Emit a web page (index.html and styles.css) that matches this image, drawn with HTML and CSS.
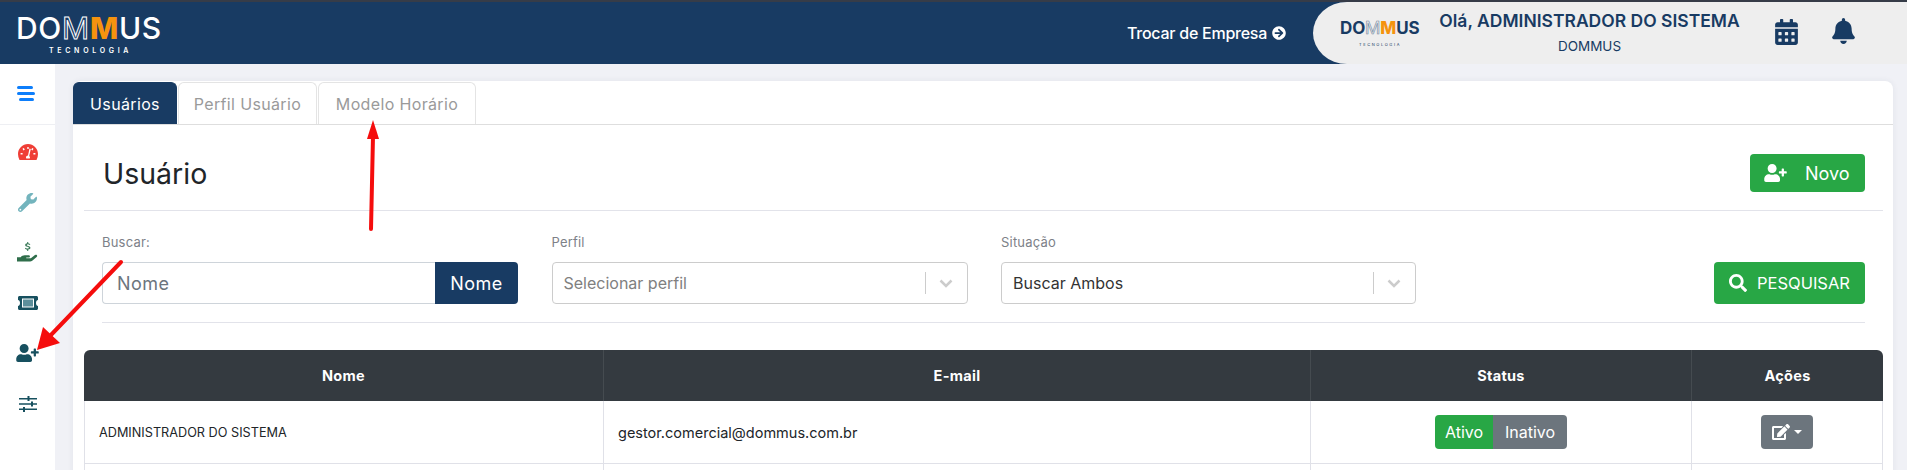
FILE: index.html
```html
<!DOCTYPE html>
<html>
<head>
	<title>Usuários</title>
	<meta http-equiv="content-type" content="text/html;charset=utf-8" />
	<link rel="stylesheet" href="styles.css">
</head>
<body>
	<header class="topbar">
		<div class="logo">
			<div class="logo-name">DO<span class="m-line">M</span><span class="m-fill">M</span>US</div>
			<div class="logo-sub">TECNOLOGIA</div>
		</div>
		<a class="switch">Trocar de Empresa
			<svg class="switch-icon" viewBox="0 0 512 512"><path d="M256 8c137 0 248 111 248 248S393 504 256 504 8 393 8 256 119 8 256 8zm-28.900 143.600l75.500 72.400H120c-13.300 0-24 10.700-24 24v16c0 13.300 10.700 24 24 24h182.600l-75.500 72.400c-9.700 9.300-9.900 24.800-.4 34.300l11 10.900c9.400 9.400 24.600 9.400 33.900 0L404.300 273c9.400-9.400 9.400-24.600 0-33.900L271.600 106.300c-9.400-9.400-24.600-9.400-33.900 0l-11 10.900c-9.500 9.600-9.300 25.100.4 34.400z"/></svg>
		</a>
		<div class="userbox">
			<div class="mini-logo">
				<div class="mini-name">DO<span class="m-line dark">M</span><span class="m-fill">M</span>US</div>
				<div class="mini-sub">TECNOLOGIA</div>
			</div>
			<div class="hello">
				<div class="hello-name">Olá, ADMINISTRADOR DO SISTEMA</div>
				<div class="hello-company">DOMMUS</div>
			</div>
			<svg class="calendar" viewBox="0 0 448 512"><path d="M0 464c0 26.500 21.500 48 48 48h352c26.500 0 48-21.500 48-48V192H0v272zm320-196c0-6.600 5.400-12 12-12h40c6.600 0 12 5.400 12 12v40c0 6.600-5.400 12-12 12h-40c-6.600 0-12-5.400-12-12v-40zm0 128c0-6.600 5.400-12 12-12h40c6.600 0 12 5.400 12 12v40c0 6.600-5.400 12-12 12h-40c-6.600 0-12-5.400-12-12v-40zM192 268c0-6.600 5.400-12 12-12h40c6.600 0 12 5.400 12 12v40c0 6.600-5.400 12-12 12h-40c-6.600 0-12-5.400-12-12v-40zm0 128c0-6.600 5.400-12 12-12h40c6.600 0 12 5.400 12 12v40c0 6.600-5.400 12-12 12h-40c-6.600 0-12-5.400-12-12v-40zM64 268c0-6.600 5.400-12 12-12h40c6.600 0 12 5.400 12 12v40c0 6.600-5.400 12-12 12H76c-6.600 0-12-5.400-12-12v-40zm0 128c0-6.600 5.400-12 12-12h40c6.600 0 12 5.400 12 12v40c0 6.600-5.400 12-12 12H76c-6.600 0-12-5.400-12-12v-40zM400 64h-48V16c0-8.800-7.200-16-16-16h-32c-8.800 0-16 7.200-16 16v48H160V16c0-8.800-7.200-16-16-16h-32c-8.800 0-16 7.200-16 16v48H48C21.500 64 0 85.500 0 112v48h448v-48c0-26.500-21.500-48-48-48z"/></svg>
			<svg class="bell" viewBox="0 0 448 512"><path d="M224 512c35.320 0 63.970-28.650 63.970-64H160.030c0 35.350 28.650 64 63.970 64zm215.390-149.710c-19.320-20.760-55.470-51.990-55.470-154.290 0-77.700-54.480-139.900-127.940-155.160V32c0-17.670-14.320-32-31.980-32s-31.980 14.330-31.980 32v20.840C118.560 68.100 64.080 130.300 64.080 208c0 102.300-36.150 133.530-55.470 154.290-6 6.450-8.660 14.160-8.610 21.710.11 16.400 12.980 32 32.100 32h383.800c19.120 0 32-15.600 32.100-32 .05-7.550-2.610-15.270-8.610-21.710z"/></svg>
		</div>
	</header>

	<div class="main">
		<nav class="sidebar">
			<div class="burger"><span></span><span></span><span></span></div>
			<ul class="menu">
				<li>
					<svg viewBox="0 0 20 16" class="ico-gauge"><path fill-rule="evenodd" d="M10 0C4.500 0 0 4.500 0 10c0 2 .5 4 1.500 6h17c1-2 1.500-4 1.500-6 0-5.500-4.500-10-10-10zM9.300 3h1.400v2H9.300zM4.500 4.700l1.300-.8 1 1.700-1.300.8zM2.600 9h2v1.500h-2zM15.400 9h2v1.500h-2zM13.200 5.600l1-1.700 1.300.8-1 1.700zM11.500 4.500l1.300.4-1.600 7.100c.5.400.8 1 .8 1.600 0 .4-.1.700-.3 1H8.300c-.2-.3-.3-.6-.3-1 0-1.100.9-2 2-2z"/></svg>
				</li>
				<li>
					<svg viewBox="0 0 512 512" class="ico-wrench"><path d="M507.730 109.100c-2.240-9.030-13.540-12.090-20.120-5.510l-74.360 74.360-67.880-11.310-11.310-67.880 74.360-74.360c6.620-6.620 3.430-17.900-5.660-20.160-47.380-11.740-99.550.91-136.580 37.930-39.640 39.640-50.550 97.100-34.050 147.200L18.740 402.760c-24.990 24.990-24.990 65.510 0 90.500 24.990 24.990 65.510 24.990 90.500 0l213.210-213.210c50.120 16.710 107.470 5.680 147.370-34.220 37.070-37.070 49.700-89.320 37.910-136.730zM64 472c-13.250 0-24-10.750-24-24 0-13.260 10.750-24 24-24s24 10.740 24 24c0 13.250-10.750 24-24 24z"/></svg>
				</li>
				<li>
					<svg viewBox="0 0 20 20" class="ico-hand"><path class="hand-dollar" d="M10.700 0v1.100c1 .1 1.700.6 2 1.300l-1 .5c-.2-.4-.6-.7-1.300-.7-.7 0-1.100.3-1.100.7 0 .4.300.6 1.300.8 1.400.3 2.200.7 2.200 1.800 0 1-.8 1.600-2.100 1.700V8.500H9.700V7.300c-1-.1-1.800-.6-2.200-1.400l1-.5c.3.600.8.900 1.600.9.800 0 1.200-.3 1.200-.8 0-.4-.3-.6-1.400-.9C8.600 4.300 7.800 3.900 7.800 2.800c0-.9.7-1.600 1.900-1.700V0z"/><path d="M0 14.500h3.500c1-1.100 2.300-1.800 3.800-1.800h3.600c.9 0 1.400.5 1.400 1.100 0 .5-.4 1-1.200 1H8.800v.6h3.600c.6 0 1-.2 1.400-.5l3.300-2.400c.7-.5 1.500-.4 1.900.1.400.5.300 1.200-.3 1.700l-4.200 3.500c-.6.500-1.300.7-2 .7H0z"/></svg>
				</li>
				<li>
					<svg viewBox="0 0 20 14" class="ico-ticket"><path fill-rule="evenodd" d="M1.500 0h17c.8 0 1.500.7 1.500 1.500V4c-1.100 0-2 1-2 3s.9 3 2 3v2.500c0 .8-.7 1.500-1.500 1.500h-17C.7 14 0 13.300 0 12.500V10c1.100 0 2-1 2-3S1.100 4 0 4V1.500C0 .7.700 0 1.500 0zM4 2.500v9h12v-9z"/><rect class="ticket-fill" x="5" y="3.500" width="10" height="7"/></svg>
				</li>
				<li>
					<svg viewBox="0 0 640 512" class="ico-user"><path d="M624 208h-64v-64c0-8.800-7.200-16-16-16h-32c-8.800 0-16 7.200-16 16v64h-64c-8.800 0-16 7.200-16 16v32c0 8.800 7.200 16 16 16h64v64c0 8.800 7.200 16 16 16h32c8.800 0 16-7.200 16-16v-64h64c8.800 0 16-7.200 16-16v-32c0-8.800-7.200-16-16-16zm-400 48c70.700 0 128-57.300 128-128S294.700 0 224 0 96 57.300 96 128s57.300 128 128 128zm89.600 32h-16.700c-22.200 10.200-46.900 16-72.900 16s-50.600-5.800-72.900-16h-16.700C60.200 288 0 348.200 0 422.400V464c0 26.500 21.500 48 48 48h352c26.500 0 48-21.500 48-48v-41.600c0-74.200-60.200-134.400-134.400-134.400z"/></svg>
				</li>
				<li>
					<svg viewBox="0 0 18 16" class="ico-sliders"><path d="M0 2h18v1.400H0zM0 7.300h18v1.400H0zM0 12.600h18V14H0z"/><path d="M8.500 0h2v5h-2zM12 5.500h2v5h-2zM4 11h2v5H4z"/></svg>
				</li>
			</ul>
		</nav>

		<section class="content">
			<div class="card">
				<div class="tabs">
					<a class="tab active">Usuários</a>
					<a class="tab tab-perfil">Perfil Usuário</a>
					<a class="tab tab-modelo">Modelo Horário</a>
				</div>
				<div class="card-body">
					<div class="title-row">
						<h1>Usuário</h1>
						<a class="btn btn-novo">
							<svg class="btn-user" viewBox="0 0 640 512"><path d="M624 208h-64v-64c0-8.800-7.200-16-16-16h-32c-8.800 0-16 7.200-16 16v64h-64c-8.800 0-16 7.200-16 16v32c0 8.800 7.200 16 16 16h64v64c0 8.800 7.200 16 16 16h32c8.800 0 16-7.200 16-16v-64h64c8.800 0 16-7.200 16-16v-32c0-8.800-7.200-16-16-16zm-400 48c70.700 0 128-57.300 128-128S294.700 0 224 0 96 57.300 96 128s57.300 128 128 128zm89.600 32h-16.700c-22.200 10.200-46.900 16-72.900 16s-50.600-5.800-72.900-16h-16.700C60.200 288 0 348.200 0 422.400V464c0 26.500 21.500 48 48 48h352c26.500 0 48-21.500 48-48v-41.600c0-74.200-60.200-134.400-134.400-134.400z"/></svg>
							Novo
						</a>
					</div>
					<div class="filters">
						<div class="field">
							<label>Buscar:</label>
							<div class="search-group">
								<div class="search-input">Nome</div>
								<div class="search-addon">Nome</div>
							</div>
						</div>
						<div class="field">
							<label>Perfil</label>
							<div class="select placeholder">
								<span class="select-value">Selecionar perfil</span>
								<span class="select-sep"></span>
								<svg class="chev" viewBox="0 0 20 20"><path d="M4.500 7.500 10 13l5.500-5.500" /></svg>
							</div>
						</div>
						<div class="field">
							<label>Situação</label>
							<div class="select">
								<span class="select-value">Buscar Ambos</span>
								<span class="select-sep"></span>
								<svg class="chev" viewBox="0 0 20 20"><path d="M4.500 7.500 10 13l5.500-5.500" /></svg>
							</div>
						</div>
						<a class="btn btn-search">
							<svg class="btn-glass" viewBox="0 0 512 512"><path d="M505 442.700L405.300 343c-4.500-4.500-10.600-7-17-7H372c27.600-35.300 44-79.700 44-128C416 93.100 322.900 0 208 0S0 93.100 0 208s93.100 208 208 208c48.300 0 92.700-16.400 128-44v16.300c0 6.400 2.500 12.500 7 17l99.700 99.700c9.400 9.400 24.600 9.400 33.900 0l28.300-28.300c9.400-9.400 9.400-24.600.1-34zM208 336c-70.700 0-128-57.200-128-128 0-70.700 57.200-128 128-128 70.700 0 128 57.200 128 128 0 70.700-57.200 128-128 128z"/></svg>
							PESQUISAR
						</a>
					</div>
					<table class="grid">
						<colgroup>
							<col class="col-nome"><col class="col-email"><col class="col-status"><col class="col-acoes">
						</colgroup>
						<thead>
							<tr><th>Nome</th><th>E-mail</th><th>Status</th><th>Ações</th></tr>
						</thead>
						<tbody>
							<tr>
								<td class="cell-name">ADMINISTRADOR DO SISTEMA</td>
								<td class="cell-email">gestor.comercial@dommus.com.br</td>
								<td class="center">
									<div class="toggle"><span class="on">Ativo</span><span class="off">Inativo</span></div>
								</td>
								<td class="center">
									<a class="btn-edit">
										<svg class="edit-icon" viewBox="0 0 576 512"><path d="M402.600 83.200l90.200 90.200c3.800 3.800 3.800 10 0 13.800L274.400 405.600l-92.800 10.300c-12.400 1.400-22.900-9.100-21.500-21.500l10.300-92.800L388.800 83.200c3.800-3.800 10-3.800 13.800 0zm162-22.900l-48.800-48.800c-15.200-15.200-39.900-15.200-55.200 0l-35.400 35.400c-3.800 3.800-3.800 10 0 13.800l90.200 90.200c3.800 3.800 10 3.800 13.800 0l35.400-35.400c15.200-15.300 15.200-40 0-55.200zM384 346.200V448H64V128h229.800c3.200 0 6.200-1.300 8.500-3.500l40-40c7.600-7.600 2.200-20.500-8.500-20.500H48C21.500 64 0 85.500 0 112v352c0 26.500 21.500 48 48 48h352c26.500 0 48-21.500 48-48V306.200c0-10.700-12.900-16-20.500-8.500l-40 40c-2.200 2.300-3.500 5.300-3.500 8.500z"/></svg>
										<span class="caret"></span>
									</a>
								</td>
							</tr>
							<tr class="empty"><td></td><td></td><td></td><td></td></tr>
						</tbody>
					</table>
				</div>
			</div>
		</section>
	</div>

	<!-- setas vermelhas por cima da tela -->
	<svg class="arrows" viewBox="0 0 1907 470">
		<path d="M371 229 373 136" class="shaft"/>
		<path d="M373 120 379 139 367 139Z" class="head"/>
		<path d="M121 262 50 336" class="shaft"/>
		<path d="M37 350 43 327 60 343Z" class="head"/>
	</svg>
</body>
</html>
```

FILE: styles.css
```css
*{padding:0;margin:0;box-sizing:border-box;}
html,body{height:100%;overflow:hidden;}
body{font-family:"Inter","Noto Sans",sans-serif;background:#f0f1f6;color:#212529;display:flex;flex-direction:column;}
a{text-decoration:none;}
svg{display:block;}

/* topo */
.topbar{height:64px;flex:none;background:#183b63;border-top:2px solid #363c48;display:flex;align-items:stretch;}
.logo{width:1127px;padding:14px 0 0 16px;color:#fff;}
.logo-name{font-size:30px;font-weight:500;line-height:24px;letter-spacing:.7px;height:27px;white-space:nowrap;}
.m-line{color:transparent;-webkit-text-stroke:1px #fff;font-weight:400;}
.m-line.dark{-webkit-text-stroke:.6px #6f86a0;}
.m-fill{color:#f5930e;font-weight:800;}
.logo-sub{font-size:7px;letter-spacing:3.700px;margin:3px 0 0 33px;line-height:9px;font-weight:600;}
.switch{width:186px;color:#fff;font-size:16px;font-weight:500;letter-spacing:-.25px;display:flex;align-items:center;gap:5px;white-space:nowrap;}
.switch-icon{width:14px;height:14px;fill:#fff;}
.userbox{flex:1;background:#eeeeee;border-radius:34px 0 0 34px/50% 0 0 50%;display:flex;align-items:center;color:#183b63;}
.mini-logo{width:126px;padding:0 0 0 27px;}
.mini-name{font-size:17px;font-weight:700;line-height:19px;white-space:nowrap;letter-spacing:-.15px;}
.mini-sub{font-size:4px;letter-spacing:1.6px;text-align:center;width:80px;line-height:7px;margin-top:3px;}
.hello{width:301px;text-align:center;margin-bottom:3px;}
.hello-name{font-size:17.500px;font-weight:600;line-height:24px;white-space:nowrap;}
.hello-company{font-size:13.500px;line-height:16px;margin-top:5px;}
.calendar{width:23px;height:26px;fill:#183b63;margin-left:35px;margin-bottom:2px;}
.bell{width:23px;height:26px;fill:#183b63;margin-left:34px;margin-bottom:4px;}

/* menu lateral */
.main{flex:1;display:flex;min-height:0;}
.sidebar{width:55px;flex:none;background:#fff;}
.burger{height:61px;border-bottom:1px solid #eeeff3;padding:22px 0 0 17px;}
.burger span{display:block;height:3px;background:#0d7efb;border-radius:2px;margin-bottom:3px;width:18px;}
.burger span:first-child{width:16px;}
.burger span:last-child{width:15px;margin-left:2px;}
.menu{list-style:none;padding-top:2px;}
.menu li{height:50.300px;display:flex;align-items:center;justify-content:center;}
.ico-gauge{width:20px;height:16px;fill:#ef3e36;}
.ico-wrench{width:19px;height:19px;fill:#73b4bd;}
.ico-hand{width:21px;height:21px;fill:#2f6e4b;}
.hand-dollar{fill:#3a7a58;}
.ico-ticket{width:20px;height:14px;fill:#17505f;}
.ticket-fill{fill:#5c8f9b;}
.ico-user{width:23px;height:18px;fill:#17505f;}
.ico-sliders{width:18px;height:16px;fill:#17505f;}

/* conteudo */
.content{flex:1;padding:17px 14px 0 18px;min-width:0;}
.card{background:#fff;border-radius:8px 8px 0 0;height:600px;box-shadow:0 0 6px rgba(40,50,90,.07);}
.tabs{height:44px;display:flex;border-bottom:1px solid #dedede;padding-top:1px;}
.tab{border:1px solid #e4e4e4;border-bottom:0;border-radius:6px 6px 0 0;margin-right:1px;display:flex;align-items:center;justify-content:center;font-size:16px;letter-spacing:.35px;color:#9a9a9a;white-space:nowrap;}
.tab.active{background:#183b63;border-color:#183b63;color:#fff;width:104px;}
.tab-perfil{width:139px;}
.tab-modelo{width:158px;}
.card-body{padding:0 10px 0 11px;}
.title-row{height:86px;border-bottom:1px solid #e2e3ea;padding:11px 18px 0 19px;display:flex;align-items:center;justify-content:space-between;}
.title-row h1{font-size:28.500px;font-weight:400;color:#212529;}
.btn{background:#28a745;color:#fff;border-radius:4px;display:flex;align-items:center;white-space:nowrap;}
.btn-novo{width:115px;height:38px;font-size:18px;padding-left:14px;gap:18px;}
.btn-user{width:23px;height:18px;fill:#fff;}
.btn-search{height:42px;font-size:16.500px;padding-left:15px;gap:10px;}
.btn-glass{width:18px;height:18px;fill:#fff;}

.filters{margin:0 18px;padding:23px 0 18px;border-bottom:1px solid #e2e3ea;display:grid;grid-template-columns:416px 416px 415px 1fr;column-gap:33.500px;align-items:end;}
.field label{display:block;font-size:13px;letter-spacing:.2px;color:#7d8188;line-height:16px;margin-bottom:12px;}
.btn-search{justify-self:end;width:151px;}
.search-group{display:flex;height:42px;}
.search-input{flex:1;border:1px solid #ced4da;border-right:0;border-radius:4px 0 0 4px;font-size:18px;letter-spacing:.5px;color:#6c757d;padding:0 14px;display:flex;align-items:center;}
.search-addon{width:83px;background:#183b63;color:#fff;font-size:18px;letter-spacing:.5px;border-radius:0 4px 4px 0;display:flex;align-items:center;justify-content:center;}
.select{height:42px;border:1px solid #cccccc;border-radius:4px;display:flex;align-items:center;padding:0 11px;font-size:16px;color:#333;}
.placeholder{color:#808080;}
.select-value{flex:1;}
.select-sep{width:1px;height:22px;background:#cccccc;}
.chev{width:20px;height:20px;margin-left:10px;fill:none;stroke:#cccccc;stroke-width:2.500;}

/* tabela */
.grid{margin-top:27px;width:1799px;table-layout:fixed;border-collapse:separate;border-spacing:0;}
.col-nome{width:519px;}
.col-email{width:707px;}
.col-status{width:381px;}
.col-acoes{width:192px;}
.grid th{height:51px;background:#343a40;color:#fff;font-size:14.500px;letter-spacing:.3px;font-weight:700;text-align:center;border-left:1px solid #454b50;}
.grid th:first-child{border-left:0;border-radius:6px 0 0 0;}
.grid th:last-child{border-radius:0 6px 0 0;}
.grid td{height:63px;padding:0 14px;border-left:1px solid #e0e1e8;border-bottom:1px solid #e0e1e8;}
.grid td:last-child{border-right:1px solid #e0e1e8;}
.grid .cell-name{font-size:12.700px;}
.grid .cell-email{font-size:14.500px;}
.grid td.center{text-align:center;padding:0;}
.toggle{display:inline-flex;height:34px;border-radius:4px;overflow:hidden;font-size:16px;color:#fff;vertical-align:middle;}
.toggle span{display:flex;align-items:center;justify-content:center;}
.toggle .on{width:58px;background:#28a745;}
.toggle .off{width:74px;background:#6c757d;}
.btn-edit{display:inline-flex;width:52px;height:34px;background:#6c757d;border-radius:4px;align-items:center;justify-content:center;gap:4px;vertical-align:middle;}
.edit-icon{width:18px;height:16px;fill:#fff;}
.caret{border-top:4px solid #fff;border-left:4px solid transparent;border-right:4px solid transparent;}

/* setas */
.arrows{position:absolute;left:0;top:0;width:1907px;height:470px;pointer-events:none;}
.shaft{fill:none;stroke:#f50d0d;stroke-width:4;stroke-linecap:round;}
.head{fill:#f50d0d;}
```
